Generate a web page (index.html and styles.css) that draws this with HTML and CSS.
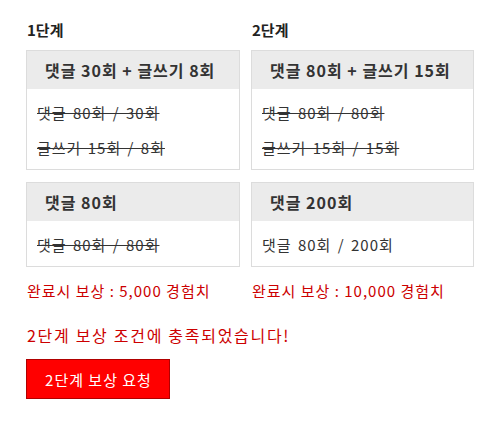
FILE: index.html
```html
<!DOCTYPE html>
<html>
<head>
    <meta charset="utf-8">
    <title>단계 보상</title>
    <link rel="stylesheet" href="styles.css">
</head>
<body>
    <div class="mission">
        <div class="steps">
            <div class="step step-1">
                <h3>1단계</h3>
                <div class="box">
                    <div class="box-title">댓글 30회 + 글쓰기 8회</div>
                    <div class="box-body">
                        <p class="done">댓글 80회 / 30회</p>
                        <p class="done">글쓰기 15회 / 8회</p>
                    </div>
                </div>
                <div class="box">
                    <div class="box-title">댓글 80회</div>
                    <div class="box-body">
                        <p class="done">댓글 80회 / 80회</p>
                    </div>
                </div>
                <div class="reward">완료시 보상 : 5,000 경험치</div>
            </div>
            <div class="step step-2">
                <h3>2단계</h3>
                <div class="box">
                    <div class="box-title">댓글 80회 + 글쓰기 15회</div>
                    <div class="box-body">
                        <p class="done">댓글 80회 / 80회</p>
                        <p class="done">글쓰기 15회 / 15회</p>
                    </div>
                </div>
                <div class="box">
                    <div class="box-title">댓글 200회</div>
                    <div class="box-body">
                        <p>댓글 80회 / 200회</p>
                    </div>
                </div>
                <div class="reward">완료시 보상 : 10,000 경험치</div>
            </div>
        </div>

        <div class="notice">2단계 보상 조건에 충족되었습니다!</div>
        <button type="button" class="reward-btn">2단계 보상 요청</button>
    </div>
</body>
</html>
```

FILE: styles.css
```css
body {
    margin: 0;
    font-family: "Noto Sans CJK KR", "Noto Sans", sans-serif;
    color: #333;
    background: #fff;
}
.mission {
    padding: 20px 0 20px 26px;
}
.steps {
    display: flex;
    gap: 11px;
}
.step {
    flex: none;
}
.step-1 {
    width: 214px;
}
.step-2 {
    width: 223px;
}
.step h3 {
    margin: 0 0 10px 1px;
    font-size: 15px;
    line-height: 20px;
    font-weight: bold;
    color: #222;
}
.box {
    border: 1px solid #dcdcdc;
    margin-bottom: 12px;
}
.box-title {
    background-color: #ebebeb;
    height: 38px;
    line-height: 38px;
    padding-left: 18px;
    font-size: 16px;
    letter-spacing: 1px;
    font-weight: bold;
    color: #333;
    white-space: nowrap;
}
.box-body {
    padding: 6px 10px 4px;
}
.box-body p {
    margin: 0;
    font-size: 15px;
    letter-spacing: 1px;
    word-spacing: 2px;
    line-height: 35px;
    color: #333;
    white-space: nowrap;
}
.box-body p.done {
    text-decoration: line-through;
}
.reward {
    margin: 14px 0 0 1px;
    font-size: 15px;
    letter-spacing: 1px;
    line-height: 20px;
    color: #cc0000;
    white-space: nowrap;
}
.notice {
    margin: 23px 0 0 1px;
    font-size: 16px;
    letter-spacing: 1.7px;
    line-height: 22px;
    color: #cc0000;
}
.reward-btn {
    margin-top: 13px;
    background-color: #ff0000;
    color: white;
    border: 1px solid #b00000;
    padding: 0 0 0 1px;
    width: 144px;
    height: 40px;
    font-family: inherit;
    font-size: 15px;
    letter-spacing: 1px;
    cursor: pointer;
}
```
